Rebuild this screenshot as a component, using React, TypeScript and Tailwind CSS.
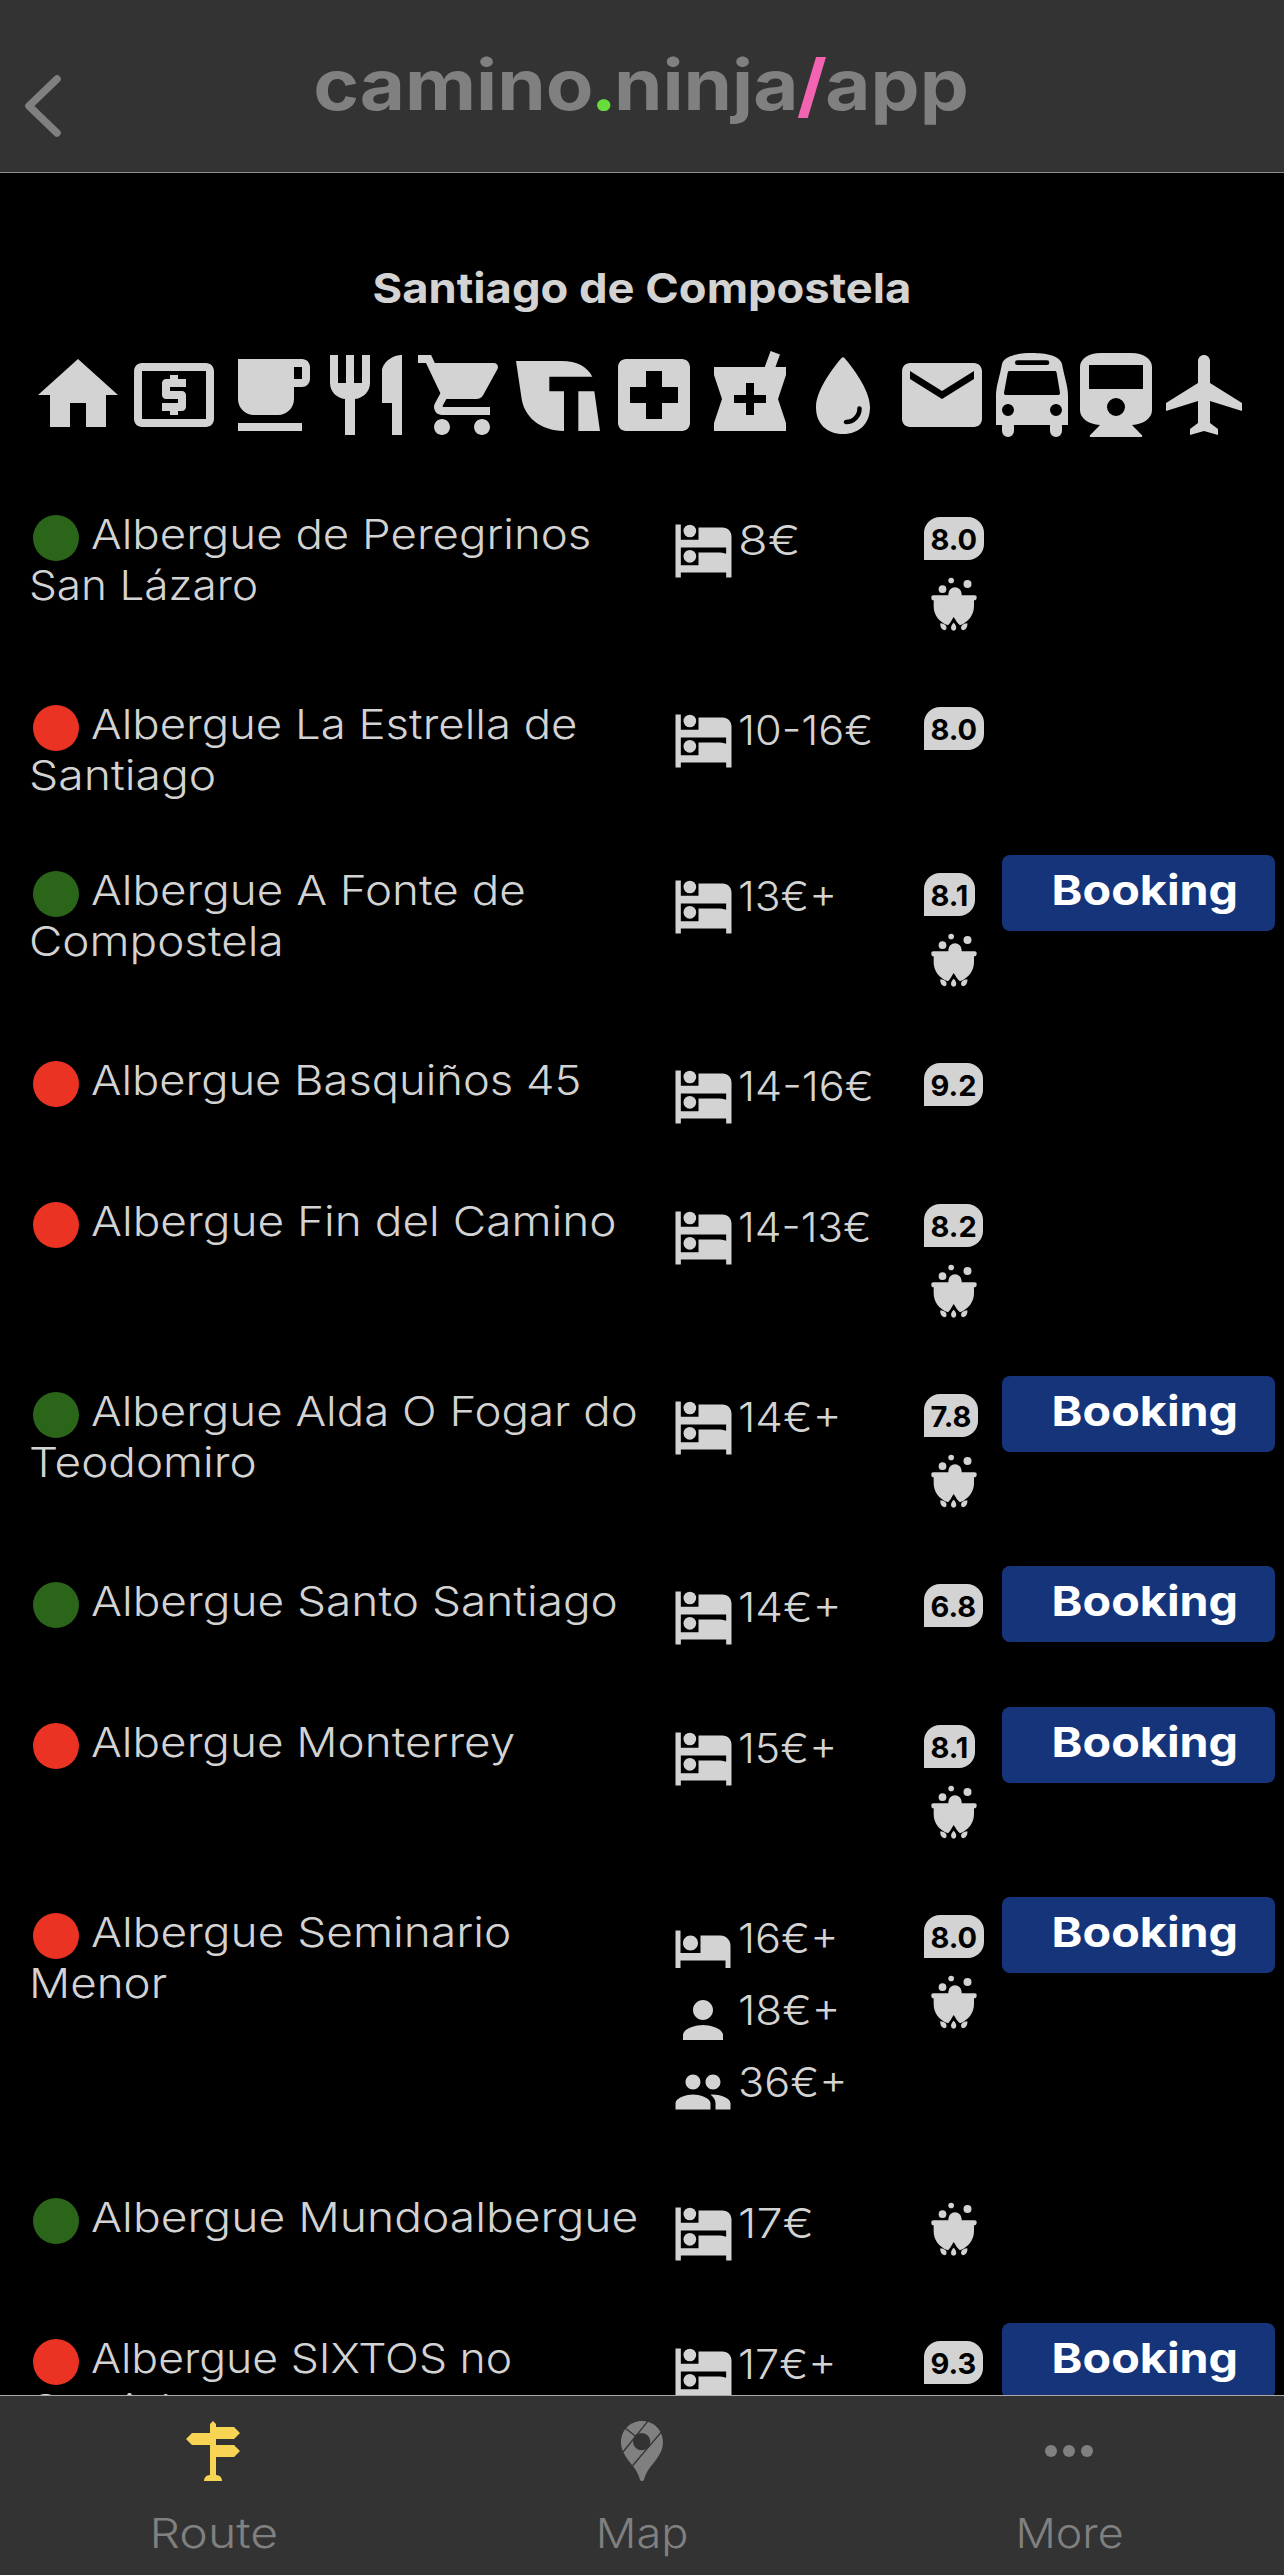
import React from "react";
import {
  MdEmail,
  MdHome,
  MdHotel,
  MdLocalAtm,
  MdLocalCafe,
  MdLocalHospital,
  MdLocalPharmacy,
  MdPeople,
  MdPerson,
  MdRestaurant,
  MdShoppingCart,
} from "react-icons/md";
import { IoWater } from "react-icons/io5";

type Price = { kind: "bunk" | "bed" | "single" | "double"; text: string; wide?: string };

type Albergue = {
  open: boolean;
  // the name is broken by hand, each line has its own stretch
  lines: { text: string; wide: string }[];
  prices: Price[];
  rating?: string;
  kitchen?: boolean;
  booking?: boolean;
};

const albergues: Albergue[] = [
  {
    open: true,
    lines: [
      { text: "Albergue de Peregrinos", wide: "scale-x-[1.112]" },
      { text: "San Lázaro", wide: "scale-x-[1.076]" },
    ],
    prices: [{ kind: "bunk", text: "8€", wide: "scale-x-[1.186]" }],
    rating: "8.0",
    kitchen: true,
  },
  {
    open: false,
    lines: [
      { text: "Albergue La Estrella de", wide: "scale-x-[1.11]" },
      { text: "Santiago", wide: "scale-x-[1.129]" },
    ],
    prices: [{ kind: "bunk", text: "10-16€" }],
    rating: "8.0",
  },
  {
    open: true,
    lines: [
      { text: "Albergue A Fonte de", wide: "scale-x-[1.116]" },
      { text: "Compostela", wide: "scale-x-[1.118]" },
    ],
    prices: [{ kind: "bunk", text: "13€+", wide: "scale-x-[1.038]" }],
    rating: "8.1",
    kitchen: true,
    booking: true,
  },
  {
    open: false,
    lines: [{ text: "Albergue Basquiños 45", wide: "scale-x-[1.105]" }],
    prices: [{ kind: "bunk", text: "14-16€" }],
    rating: "9.2",
  },
  {
    open: false,
    lines: [{ text: "Albergue Fin del Camino", wide: "scale-x-[1.121]" }],
    prices: [{ kind: "bunk", text: "14-13€", wide: "scale-x-[1.036]" }],
    rating: "8.2",
    kitchen: true,
  },
  {
    open: true,
    lines: [
      { text: "Albergue Alda O Fogar do", wide: "scale-x-[1.112]" },
      { text: "Teodomiro", wide: "scale-x-[1.118]" },
    ],
    prices: [{ kind: "bunk", text: "14€+", wide: "scale-x-[1.075]" }],
    rating: "7.8",
    kitchen: true,
    booking: true,
  },
  {
    open: true,
    lines: [{ text: "Albergue Santo Santiago", wide: "scale-x-[1.121]" }],
    prices: [{ kind: "bunk", text: "14€+", wide: "scale-x-[1.075]" }],
    rating: "6.8",
    booking: true,
  },
  {
    open: false,
    lines: [{ text: "Albergue Monterrey", wide: "scale-x-[1.117]" }],
    prices: [{ kind: "bunk", text: "15€+", wide: "scale-x-[1.045]" }],
    rating: "8.1",
    kitchen: true,
    booking: true,
  },
  {
    open: false,
    lines: [
      { text: "Albergue Seminario", wide: "scale-x-[1.122]" },
      { text: "Menor", wide: "scale-x-[1.115]" },
    ],
    prices: [
      { kind: "bed", text: "16€+", wide: "scale-x-[1.055]" },
      { kind: "single", text: "18€+", wide: "scale-x-[1.072]" },
      { kind: "double", text: "36€+" },
    ],
    rating: "8.0",
    kitchen: true,
    booking: true,
  },
  {
    open: true,
    lines: [{ text: "Albergue Mundoalbergue", wide: "scale-x-[1.127]" }],
    prices: [{ kind: "bunk", text: "17€", wide: "scale-x-[1.14]" }],
    kitchen: true,
  },
  {
    open: false,
    lines: [
      { text: "Albergue SIXTOS no", wide: "scale-x-[1.086]" },
      { text: "Caminho", wide: "scale-x-[1.08]" },
    ],
    prices: [{ kind: "bunk", text: "17€+" }],
    rating: "9.3",
    booking: true,
  },
];

const BunkIcon = ({ className }: { className?: string }) => (
  <svg viewBox="37.5 31.5 180 180" className={className} fill="currentColor">
    <path d="M45 45h16v46h53V54h72c16 0 27 11 27 28v122h-16v-15H61v15H45zM61 114v53h53v-38h55c12 0 21 1 28 4v-19z" fillRule="evenodd" />
    <circle cx="88" cy="64.500" r="19" />
    <circle cx="88" cy="140.500" r="19" />
  </svg>
);

const KitchenIcon = ({ className }: { className?: string }) => (
  <svg viewBox="34 35 138 162" className={className} fill="currentColor">
    <circle cx="68.500" cy="71.500" r="11.500" />
    <circle cx="94.500" cy="45.500" r="8.500" />
    <circle cx="143.500" cy="56" r="12" />
    <path d="M41 90h45V86a20 20 0 0 1 40 0v4h39a6 6 0 0 1 6 7c0 5-3 8-8 8v17c0 26-16 48-42 58-7-5-12-14-19-25-7 11-11 20-17 25-28-10-43-32-43-58v-17c-5 0-7-3-7-8a6 6 0 0 1 6-7z" />
    <path d="M62 174c14 1 21 8 18 17-2 5-9 4-13 0-4-5-6-10-5-17zM102 172c9 9 10 18 4 23-3 2-5 2-8 0-6-5-5-14 4-23zM143 174c-14 1-21 8-18 17 2 5 9 4 13 0 4-5 6-10 5-17z" />
  </svg>
);

const TransitIcon = () => (
  <svg viewBox="240 51 288 288" className="size-24" fill="currentColor">
    <path d="M258 93h137c46 0 76 17 92 47H358v44h44v119c-72-2-121-42-128-103zM445 184h48l17 119h-65z" />
  </svg>
);

const BusIcon = () => (
  <svg viewBox="420 51 252 288" className="h-24 w-[84px]" fill="currentColor">
    <path
      fillRule="evenodd"
      d="M438 285v-88c0-28 10-52 18-95 5-25 51-33 90-33s85 8 90 33c8 43 18 67 18 95v88h-18v18a18 18 0 0 1-36 0v-18H492v18a18 18 0 0 1-36 0v-18zM502 91a7 7 0 0 0 0 14h89a7 7 0 0 0 0-14zM479 123c-4 0-5 2-6 6l-11 59c0 4 2 7 6 7h156c4 0 6-3 6-7l-10-59c-1-4-2-6-6-6zM474 222a18 18 0 1 0 0 36 18 18 0 0 0 0-36zM618 222a18 18 0 1 0 0 36 18 18 0 0 0 0-36z"
    />
  </svg>
);

const TrainIcon = () => (
  <svg viewBox="672 51 252 288" className="h-24 w-[84px]" fill="currentColor">
    <path
      fillRule="evenodd"
      d="M752 69h92c36 0 62 18 62 42v130c0 24-26 43-60 44l30 31c2 3 1 5-2 5H722c-3 0-4-2-2-5l30-31c-34-1-60-20-60-44V111c0-24 26-42 62-42zM717 105v72h162v-72zM798 204a27 27 0 1 0 0 54 27 27 0 0 0 0-54z"
    />
  </svg>
);

const PlaneIcon = () => (
  <svg viewBox="0 0 24 24" className="size-24" fill="currentColor">
    <path d="M21 16v-2l-8-5V3.500c0-.83-.67-1.500-1.500-1.500S10 2.670 10 3.500V9l-8 5v2l8-2.500V19l-2 1.500V22l3.500-1 3.500 1v-1.500L13 19v-5.500l8 2.500z" />
  </svg>
);

const SignpostIcon = () => (
  <svg viewBox="0 0 54 60" className="h-[60px] w-[54px]" fill="currentColor">
    <path d="M24 3l3-3 3 3v3h18l6 6-6 6H30v6h18l6 6-6 6H30v18c4 0 6 3 6 6H18c0-3 2-6 6-6V24H6l-6-6 6-6h18z" />
  </svg>
);

const MapPinIcon = () => (
  <svg viewBox="30 33 126 180" className="h-[60px] w-[42px]">
    <path
      fill="currentColor"
      fillRule="evenodd"
      d="M93 33c36 0 63 28 63 64 0 23-12 41-26 59-16 20-25 32-30 50-2 6-4 7-7 7s-5-1-7-7c-5-18-14-30-30-50-14-18-26-36-26-59 0-36 27-64 63-64zM92 69a26 26 0 1 0 0 52 26 26 0 0 0 0-52z"
    />
    <path stroke="#333" strokeWidth="4" d="M42 54l32 25M112 32L36 126M152 65L64 168" />
  </svg>
);

const services = [
  <MdHome className="size-24" />,
  <MdLocalAtm className="size-24" />,
  <MdLocalCafe className="size-24" />,
  <MdRestaurant className="size-24" />,
  <MdShoppingCart className="size-24" />,
  <TransitIcon />,
  <MdLocalHospital className="size-24" />,
  <MdLocalPharmacy className="size-24" />,
  <IoWater className="mr-[3px] -ml-[3px] size-24" />,
  <MdEmail className="size-24" />,
  <BusIcon />,
  <TrainIcon />,
  <PlaneIcon />,
];

const priceIcons = {
  bunk: BunkIcon,
  bed: MdHotel,
  single: MdPerson,
  double: MdPeople,
};

const AlbergueRow = ({ item }: { item: Albergue }) => (
  <li className="grid grid-cols-[643px_251px_78px_273px]">
    <div className="pt-2.5 pb-[54px]">
      {item.lines.map((line, i) => (
        <div key={i} className="flex h-[51px] whitespace-nowrap">
          {i === 0 && (
            <span
              className={`mt-1.5 mr-[13px] ml-[3px] size-[46px] shrink-0 rounded-full ${item.open ? "bg-[#2b651a]" : "bg-[#ea3323]"}`}
            />
          )}
          <span className={`-ml-px origin-left ${line.wide}`}>{line.text}</span>
        </div>
      ))}
    </div>

    <div className="pb-[69px]">
      {item.prices.map((price, i) => {
        const Icon = priceIcons[price.kind];
        return (
          <div key={i} className="flex h-[72px]">
            <Icon className="mt-[21px] size-[60px] shrink-0" />
            <span className={`mt-4 ml-[5px] origin-left whitespace-nowrap ${price.wide ?? "scale-x-[1.055]"}`}>
              {price.text}
            </span>
          </div>
        );
      })}
    </div>

    <div className="flex flex-col items-start pt-[18px] pb-[58px]">
      {item.rating && (
        <span className="mb-[15px] h-[43px] rounded-[16px] rounded-bl-none bg-[#d3d3d3] px-[6.5px] text-[29px] leading-[46px] font-bold text-black">
          {item.rating}
        </span>
      )}
      {item.kitchen && <KitchenIcon className="mt-0.5 ml-[7px] h-[54px] w-[46px]" />}
    </div>

    {item.booking && (
      <button className="flex h-[76px] w-[273px] items-center justify-center rounded-lg bg-[#15347a] pb-[5px] pl-[12px] font-bold text-white">
        <span className="scale-x-[1.139]">Booking</span>
      </button>
    )}
  </li>
);

export default function App() {
  return (
    <div className="flex h-[2575px] w-[1284px] flex-col overflow-hidden bg-black font-['Inter',sans-serif] text-[41px] leading-[51px] font-light text-[#d3d3d3]">
      <header className="grid h-[173px] shrink-0 grid-cols-[100px_1fr_100px] border-b border-[#8c8c8c] bg-[#333] text-[#808080]">
        <svg viewBox="0 0 36 62" className="mt-[75px] ml-[25px] h-[62px] w-9" fill="none" stroke="currentColor">
          <path d="M32 4L4 31l28 27" strokeWidth="7.500" strokeLinecap="round" strokeLinejoin="round" />
        </svg>
        <h1 className="mt-[42px] mr-[2px] scale-x-[1.113] text-center text-[70px] leading-[85px] font-bold">
          camino<span className="-mx-[2.500px] text-[#66dd3c]">.</span>ninja
          <span className="-mx-[1.500px] text-[#f263b1]">/</span>app
        </h1>
      </header>

      <main className="min-h-0 flex-1 overflow-hidden pt-[90px] pl-[30px]">
        <h2 className="mr-[30px] scale-x-[1.105] text-center font-bold">Santiago de Compostela</h2>

        <div className="mt-[33px] flex">
          {services.map((icon, i) => (
            <React.Fragment key={i}>{icon}</React.Fragment>
          ))}
        </div>

        <ul className="mt-14">
          {albergues.map((item, i) => (
            <AlbergueRow key={i} item={item} />
          ))}
        </ul>
      </main>

      <nav className="grid h-[180px] shrink-0 grid-cols-3 border-t border-[#aaa] bg-[#333] pt-[25px] text-[#808080]">
        <a className="flex flex-col items-center">
          <span className="mr-[2px] text-[#f8d455]">
            <SignpostIcon />
          </span>
          <span className="mt-[27px] scale-x-[1.174]">Route</span>
        </a>
        <a className="flex flex-col items-center">
          <MapPinIcon />
          <span className="mt-[27px] scale-x-[1.101]">Map</span>
        </a>
        <a className="flex flex-col items-center">
          <span className="mr-[2px] flex h-[60px] items-center gap-1.5">
            <i className="size-3 rounded-full bg-[#808080]" />
            <i className="size-3 rounded-full bg-[#808080]" />
            <i className="size-3 rounded-full bg-[#808080]" />
          </span>
          <span className="mt-[27px] scale-x-[1.093]">More</span>
        </a>
      </nav>
    </div>
  );
}
